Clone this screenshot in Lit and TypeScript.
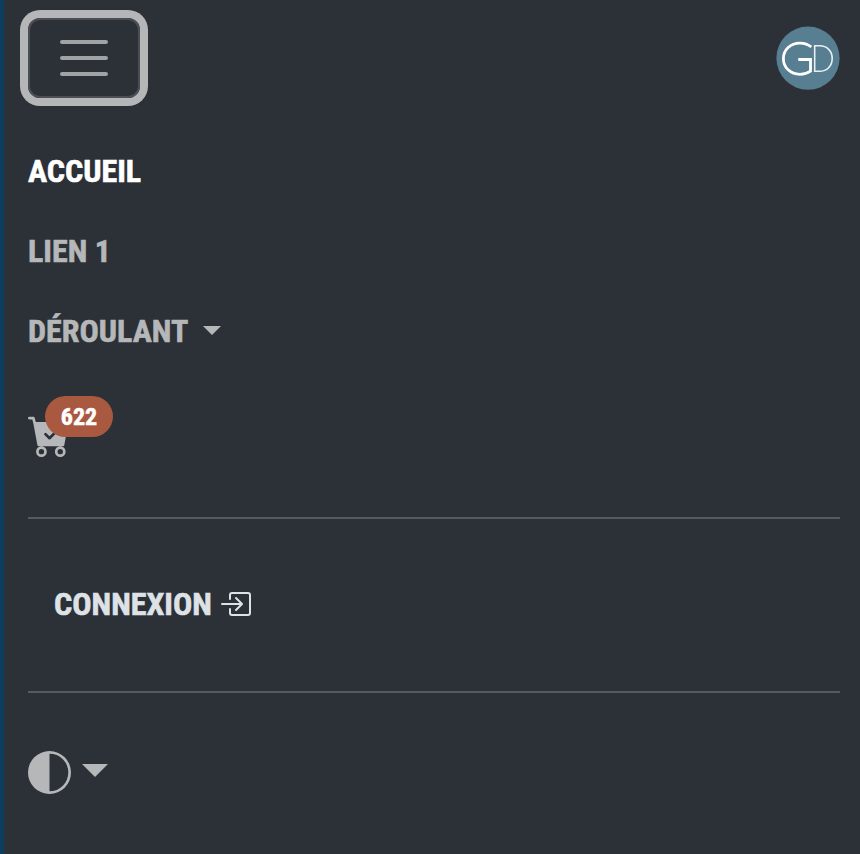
import { LitElement, html, css } from "lit";
import { customElement } from "lit/decorators.js";

@customElement("app-root")
export class AppRoot extends LitElement {
  static styles = css`
    :host {
      display: block;
      box-sizing: border-box;
      height: 854px;
      overflow: hidden;
      background: #2c3037;
      border-left: 4px solid #0a3d5e;
      padding: 10px 20px 0 24px;
      color: #b5b7b9;
      font-family: "Roboto Condensed", Roboto, sans-serif;
      font-stretch: 75%;
      font-weight: 700;
      font-size: 32px;
      line-height: 48px;
    }
    * { box-sizing: border-box; }
    svg { display: block; flex: none; }
    header { display: flex; justify-content: space-between; align-items: center; height: 96px; }
    .toggler {
      width: 112px; height: 80px; padding: 0; background: none;
      border: 2px solid #4b4f55; border-radius: 12px;
      box-shadow: 0 0 0 8px #b5b6b8;
      display: flex; align-items: center; justify-content: center;
    }
    .item { display: flex; align-items: center; height: 80px; white-space: nowrap; }
    .item span { padding-bottom: 2px; -webkit-text-stroke: 0.6px currentColor; }
    nav { padding-top: 26px; }
    .active { color: #fff; }
    .caret { width: 0; height: 0; border: 9px solid transparent; border-top-color: currentColor; border-bottom: 0; margin: 0 0 3px 15px; }
    .caret.big { border-width: 13px 13px 0; margin: 0 0 4px 11px; }
    .cart { position: relative; height: 145px; padding-top: 42px; }
    .badge {
      position: absolute; left: 17px; top: 24px; width: 68px; height: 41px;
      border-radius: 21px; background: #a9593f; color: #fff;
      font-size: 24px; line-height: 42px; text-align: center;
      -webkit-text-stroke: 0.5px currentColor;
    }
    hr { margin: 0; border: 0; height: 2px; background: #565a61; }
    .login { height: 172px; padding-left: 26px; color: #dee2e6; gap: 7px; }
    .login svg { margin-bottom: 2px; }
    .theme { height: 159px; }
  `;

  render() {
    return html`
      <header>
        <button class="toggler" aria-label="Menu">
          <svg width="60" height="60" viewBox="0 0 30 30" fill="none" stroke="#a0a2a4" stroke-width="2" stroke-linecap="round">
            <path d="M4 7h22M4 15h22M4 23h22" />
          </svg>
        </button>
        <svg width="64" height="64" viewBox="0 0 64 64" fill="none" stroke="#fff">
          <circle cx="32" cy="32.2" r="31.6" fill="#587e91" stroke="none" />
          <path stroke-width="2.8" d="M35.3 21C32 18.2 28 17.1 24 17.1C14.5 17.1 7.4 23.8 7.4 32.7C7.4 41.6 14.5 48.3 24 48.3C28 48.3 31.5 47.2 34.5 45.2V33.5H22.3" />
          <path stroke-width="1.6" stroke="#e8f0f6" d="M38.7 19.8V45.3H43.5C51 45.3 56.2 40 56.2 32.5S51 19.8 43.5 19.8Z" />
        </svg>
      </header>
      <nav>
        <div class="item active"><span>ACCUEIL</span></div>
        <div class="item"><span>LIEN 1</span></div>
        <div class="item"><span>DÉROULANT</span><i class="caret"></i></div>
        <div class="cart">
          <svg width="43" height="43" viewBox="0 0 16 16" fill="currentColor">
            <path d="M.5 1a.5.5 0 0 0 0 1h1.11l.401 1.607 1.498 7.985A.5.5 0 0 0 4 12h1a2 2 0 1 0 0 4 2 2 0 0 0 0-4h7a2 2 0 1 0 0 4 2 2 0 0 0 0-4h1a.5.5 0 0 0 .491-.408l1.5-8A.5.5 0 0 0 14.5 3H2.89l-.405-1.621A.5.5 0 0 0 2 1zM6 14a1 1 0 1 1-2 0 1 1 0 0 1 2 0m7 0a1 1 0 1 1-2 0 1 1 0 0 1 2 0m-1.646-7.646-3 3a.5.5 0 0 1-.708 0l-1.5-1.5a.5.5 0 1 1 .708-.708L8 8.293l2.646-2.647a.5.5 0 0 1 .708.708" />
          </svg>
          <span class="badge">622</span>
        </div>
      </nav>
      <hr />
      <div class="item login">
        <span>CONNEXION</span>
        <svg width="32" height="32" viewBox="0 0 16 16" fill="currentColor">
          <path d="M6 3.5a.5.5 0 0 1 .5-.5h8a.5.5 0 0 1 .5.5v9a.5.5 0 0 1-.5.5h-8a.5.5 0 0 1-.5-.5v-2a.5.5 0 0 0-1 0v2A1.5 1.5 0 0 0 6.5 14h8a1.5 1.5 0 0 0 1.5-1.5v-9A1.5 1.5 0 0 0 14.5 2h-8A1.5 1.5 0 0 0 5 3.5v2a.5.5 0 0 0 1 0z" />
          <path d="M11.854 8.354a.5.5 0 0 0 0-.708l-3-3a.5.5 0 1 0-.708.708L10.293 7.5H1.5a.5.5 0 0 0 0 1h8.793l-2.147 2.146a.5.5 0 0 0 .708.708z" />
        </svg>
      </div>
      <hr />
      <div class="item theme">
        <svg width="43" height="43" viewBox="0 0 16 16" fill="currentColor">
          <path d="M8 15A7 7 0 1 0 8 1zm0 1A8 8 0 1 1 8 0a8 8 0 0 1 0 16" />
        </svg>
        <i class="caret big"></i>
      </div>
    `;
  }
}
